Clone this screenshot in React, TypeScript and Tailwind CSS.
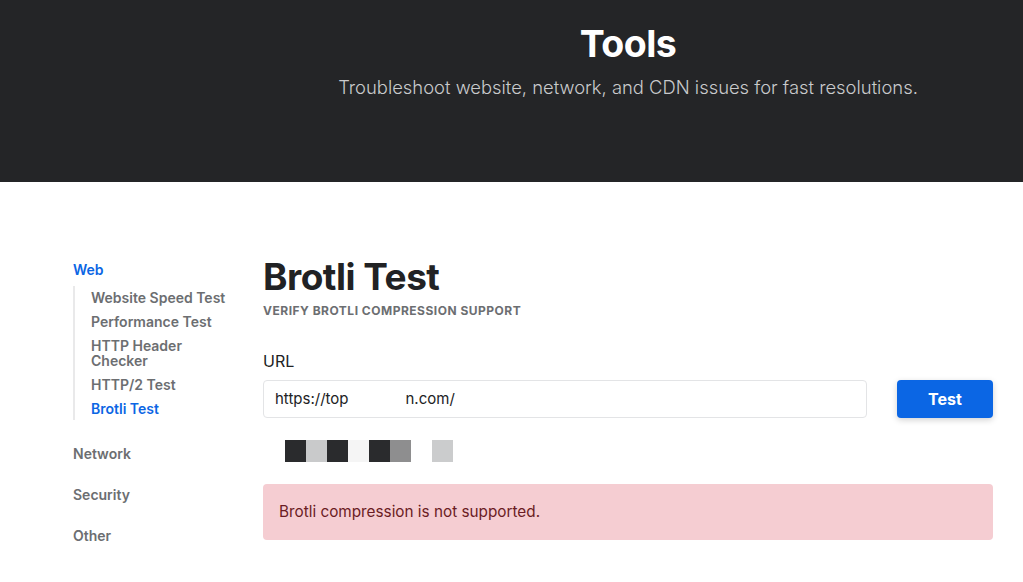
const webLinks = [
  { label: "Website Speed Test" },
  { label: "Performance Test" },
  { label: "HTTP Header Checker" },
  { label: "HTTP/2 Test" },
  { label: "Brotli Test", active: true },
];

const pixels = ["#2a2b2d", "#c9cacb", "#2a2b2d", "#f5f5f5", "#2a2b2d", "#8e8e8f", "#ffffff", "#cbcccd"];

export default function App() {
  return (
    <div className="min-h-screen bg-white font-['Inter',sans-serif] text-[#212529]">
      {/* Hero */}
      <header className="h-[182px] bg-[#242527]">
        <div className="ml-[263px] w-[730px] pt-[21px] text-center">
          <h1 className="text-[37.5px] font-bold leading-[46px] tracking-[-0.6px] text-white">Tools</h1>
          <p className="mt-[7px] text-[18.4px] font-light leading-[26px] text-[#c9cacc]">
            Troubleshoot website, network, and CDN issues for fast resolutions.
          </p>
        </div>
      </header>

      <div className="flex items-start">
        {/* Sidebar */}
        <aside className="ml-[73px] w-[190px] pt-[78px] text-[14px] font-semibold">
          <div className="leading-[20px] text-[#0b66e4]">Web</div>
          <ul className="mt-[6px] flex w-[160px] flex-col gap-[9px] border-l-2 border-[#e9e9ea] py-[4px] pl-[16px] leading-[15px]">
            {webLinks.map((l) => (
              <li key={l.label} className={l.active ? "text-[#0b66e4]" : "text-[#6c6e71]"}>
                {l.label}
              </li>
            ))}
          </ul>
          <div className="mt-[24px] flex flex-col gap-[21px] leading-[20px] text-[#6c6e71]">
            <div>Network</div>
            <div>Security</div>
            <div>Other</div>
          </div>
        </aside>

        {/* Main */}
        <main className="w-[730px] pt-[73px]">
          <h2 className="text-[37px] font-bold leading-[43px] tracking-[-0.5px] text-[#212224]">Brotli Test</h2>
          <p className="mt-[5px] text-[12px] font-bold uppercase leading-[16px] tracking-[0.5px] text-[#6c6e71]">
            Verify Brotli compression support
          </p>

          <label className="mt-[31px] block text-[16px] leading-[22px] text-[#212224]">URL</label>
          <div className="mt-[8px] flex items-center gap-[30px]">
            <div className="flex h-[38px] flex-1 items-center rounded-[4px] border border-[#e3e4e6] px-[11px] text-[15px] text-[#212224]">
              <span>https://top</span>
              <span className="w-[57px]" />
              <span>n.com/</span>
            </div>
            <button className="h-[38px] w-[96px] rounded-[4px] bg-[#0b66e4] text-[16px] font-bold text-white shadow-[0_2px_6px_rgba(0,0,0,0.18)]">
              Test
            </button>
          </div>

          <div className="ml-[22px] mt-[22px] flex h-[22px]">
            {pixels.map((c, i) => (
              <div key={i} className="h-[22px] w-[21px]" style={{ backgroundColor: c }} />
            ))}
          </div>

          <div className="mt-[22px] flex h-[56px] items-center rounded-[4px] bg-[#f5cdd2] px-[16px] text-[15.3px] text-[#6b1c24]">
            Brotli compression is not supported.
          </div>
        </main>
      </div>
    </div>
  );
}
